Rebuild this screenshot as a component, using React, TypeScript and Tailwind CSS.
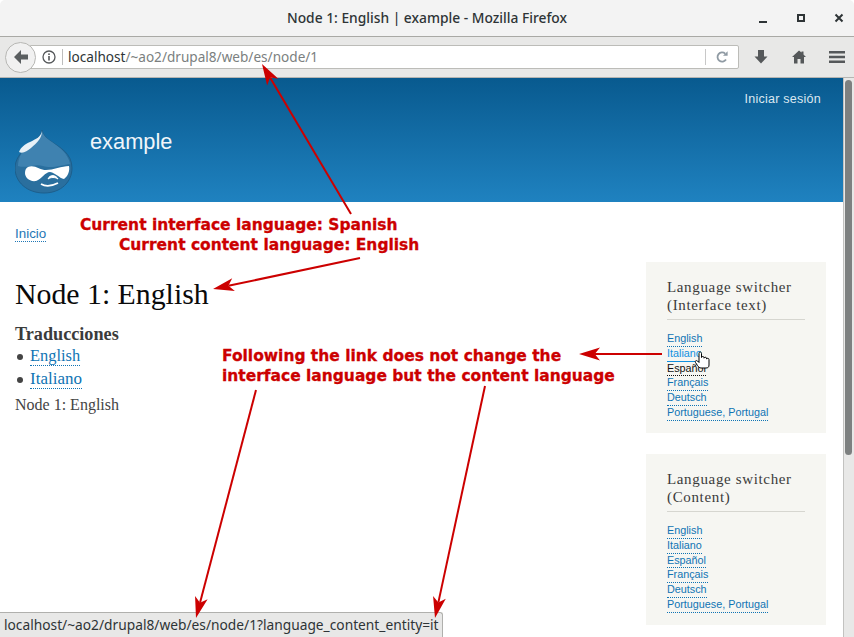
const langs1 = ["English", "Italiano", "Español", "Français", "Deutsch", "Portuguese, Portugal"];

function Drop() {
  return (
    <svg width="58" height="65" viewBox="0 0 58 65" className="block">
      <path d="M27 1 C26 8 19 12 12 18 C5 24 0 31 0 39 C0 53 12 64 29 64 C46 64 57 53 57 39 C57 24 44 18 37 13 C32 10 28 6 27 1 Z" fill="#2a6f9e" stroke="#1d5f8c" strokeWidth="1" />
      <path d="M27 2 C26 8 19 12 12 18 C6 23 3 30 3 37 C12 40 20 34 28 37 C36 40 48 36 55 35 C53 24 44 18 37 13 C32 10 28 6 27 2 Z" fill="#3f82b0" />
      <path d="M27 2 C27 9 22 14 16 19 C12 22 8 25 4 23 C6 18 10 15 15 13 C21 10 26 8 27 2 Z" fill="#e8f1f7" />
      <path d="M13 38 C19 35 25 41 31 41 C38 41 47 37 54 37 C55 42 53 47 49 50 C44 49 41 44 35 43 C30 43 27 50 21 52 C14 53 10 48 10 44 C10 41 11 39 13 38 Z" fill="#ffffff" />
      <path d="M33 50 C35 45 41 46 43 50 C40 48 36 48 33 50 Z" fill="#ffffff" stroke="#ffffff" strokeWidth="1" />
      <path d="M26 55 C31 58 37 57 43 54" fill="none" stroke="#ffffff" strokeWidth="1.8" />
    </svg>
  );
}

function Block({ title, second, active }: { title: string; second: string; active?: boolean }) {
  return (
    <div className="w-[180px] h-[171px] bg-[#f6f6f2] pt-[16px] px-[21px]">
      <h2 className="text-[15px] leading-[18px] text-[#3b3b3b] pb-[5px] border-b border-[#d6d6d0] font-['Liberation_Serif',serif] tracking-[0.65px] w-[138px]">
        {title}
        <br />
        {second}
      </h2>
      <ul className="mt-[12px] font-['Liberation_Sans',sans-serif] text-[10.8px] leading-[14px] flex flex-col items-start">
        {langs1.map((l, i) => (
          <li key={l}>
            <a
              className={
                active && i === 1
                  ? "text-[#1090e0] border-b border-[#1090e0] block leading-[13.8px]"
                  : active && i === 2
                    ? "text-[#111111] border-b border-dotted border-[#111111] block leading-[13.8px]"
                    : "text-[#0f74b4] border-b border-dotted border-[#0f74b4] block leading-[13.8px]"
              }
            >
              {l}
            </a>
          </li>
        ))}
      </ul>
    </div>
  );
}

function Arrow({ x1, y1, x2, y2 }: { x1: number; y1: number; x2: number; y2: number }) {
  const a = Math.atan2(y2 - y1, x2 - x1);
  const L = 21;
  const W = 6.5;
  const bx = x2 - L * Math.cos(a);
  const by = y2 - L * Math.sin(a);
  const nx = x2 - L * 0.75 * Math.cos(a);
  const ny = y2 - L * 0.75 * Math.sin(a);
  const px = -Math.sin(a) * W;
  const py = Math.cos(a) * W;
  return (
    <g>
      <line x1={x1} y1={y1} x2={nx} y2={ny} stroke="#cc0000" strokeWidth="2" />
      <polygon points={`${x2},${y2} ${bx + px},${by + py} ${nx},${ny} ${bx - px},${by - py}`} fill="#cc0000" />
    </g>
  );
}

const noteClass =
  "absolute font-['DejaVu_Sans',sans-serif] font-bold text-[15.48px] leading-[20px] text-[#cc0000] whitespace-nowrap [-webkit-text-stroke:0.3px_#cc0000]";

export default function App() {
  return (
    <div className="relative w-[854px] h-[637px] overflow-hidden flex flex-col bg-white font-['Noto_Sans',sans-serif]">
      {/* title bar */}
      <div className="relative h-[37px] shrink-0 bg-[#f3f3f3] border-b border-[#a9a9a5] rounded-t-[5px] flex items-center justify-center text-[13.8px] font-medium text-[#2e3436]">
        <span>Node 1: English | example - Mozilla Firefox</span>
        <div className="absolute right-[9px] top-0 h-full flex items-center gap-[26px] text-[#2e3436]">
          <svg width="12" height="12" viewBox="0 0 12 12"><rect x="2" y="9" width="8" height="2" fill="#2e3436" /></svg>
          <svg width="12" height="12" viewBox="0 0 12 12"><path d="M3 3h6v6H3z" fill="none" stroke="#2e3436" strokeWidth="2" /></svg>
          <svg width="12" height="12" viewBox="0 0 12 12"><path d="M2.500 2.500l7 7M9.500 2.500l-7 7" fill="none" stroke="#2e3436" strokeWidth="2" /></svg>
        </div>
      </div>
      {/* nav bar */}
      <div className="h-[41px] shrink-0 bg-[#e8e8e7] border-b border-[#b5b5b2] flex items-center pl-[5px] pr-[5px]">
        <div className="relative z-10 w-[31px] h-[31px] rounded-full border border-[#b7b7b4] bg-[#f1f1f1] flex items-center justify-center">
          <svg width="16" height="16" viewBox="0 0 16 16"><path d="M8 1L1 8l7 7v-4.500h7v-5H8z" fill="#5a5e60" /></svg>
        </div>
        <div className="-ml-[6px] w-[709px] h-[24px] bg-white border border-[#bcbcb8] rounded-r-[2px] flex items-center text-[13.6px]">
          <svg width="16" height="16" viewBox="0 0 16 16" className="ml-[10px] shrink-0">
            <circle cx="8" cy="8" r="6" fill="none" stroke="#55585a" strokeWidth="1.3" />
            <rect x="7.2" y="7" width="1.6" height="4.5" fill="#55585a" />
            <rect x="7.2" y="4.4" width="1.6" height="1.6" fill="#55585a" />
          </svg>
          <div className="ml-[5px] w-px h-[16px] bg-[#bdbdbd]" />
          <span className="ml-[5px] whitespace-nowrap text-[#2e3436]">
            localhost<span className="text-[#7b7f80]">/~ao2/drupal8/web/es/node/1</span>
          </span>
          <div className="ml-auto w-px h-[16px] bg-[#c8c8c8]" />
          <svg width="14" height="14" viewBox="0 0 14 14" className="mx-[9px] shrink-0">
            <path d="M11 9.500A4.600 4.600 0 1 1 10.200 3.600" fill="none" stroke="#8f9aa3" strokeWidth="1.800" />
            <path d="M8 5.800h4.600V1.200z" fill="#8f9aa3" />
          </svg>
        </div>
        <div className="flex items-center ml-[14px] gap-[22px]">
          <svg width="16" height="16" viewBox="0 0 16 16"><path d="M5 1h6v6.500h3.500L8 14.500 1.500 7.500H5z" fill="#55585a" /></svg>
          <svg width="16" height="16" viewBox="0 0 16 16"><path d="M8 1.500L1 8h2v6.500h3.500V10h3v4.500H13V8h2L12.500 5.500V2.500h-2v1z" fill="#55585a" /></svg>
          <svg width="16" height="14" viewBox="0 0 16 14"><path d="M0 1h16v2.600H0zM0 5.700h16v2.600H0zM0 10.400h16V13H0z" fill="#55585a" /></svg>
        </div>
      </div>
      {/* viewport */}
      <div className="flex-1 flex min-h-0">
        <div className="flex-1 min-w-0 flex flex-col">
          <header className="relative h-[124px] shrink-0 bg-gradient-to-b from-[#085a8f] to-[#1f82c0] pl-[15px] pr-[22px] flex items-end text-white">
            <div className="mb-[8px]"><Drop /></div>
            <div className="ml-[17px] mb-[48px] text-[21.8px] leading-[24px] font-['Liberation_Sans',sans-serif] text-[#f1f6fa]">example</div>
            <div className="absolute right-[22px] top-[14px] text-[12.5px] leading-[15px] font-['Liberation_Sans',sans-serif] tracking-[0.25px] text-[#dce8f1]">Iniciar sesión</div>
          </header>
          <div className="flex-1 flex min-h-0 pr-[17px]">
            <main className="flex-1 min-w-0 pl-[15px]">
              <div className="pt-[24px] font-['Liberation_Sans',sans-serif] text-[13.4px] leading-[15px]">
                <a className="text-[#1f77b5] border-b border-dotted border-[#1f77b5]">Inicio</a>
              </div>
              <h1 className="mt-[35px] font-['Liberation_Serif',serif] text-[29.8px] leading-[36px] text-[#0a0a0a]">Node 1: English</h1>
              <div className="mt-[11px] font-['Liberation_Serif',serif] text-[17px] leading-[22px] text-[#3b3b3b]">
                <div className="font-bold text-[18.2px]">Traducciones</div>
                <ul>
                  <li className="flex items-center h-[23px]">
                    <span className="w-[6px] h-[6px] rounded-full bg-[#444444] ml-[2px] mr-[7px]" />
                    <a className="text-[#0f74b4] border-b border-dotted border-[#0f74b4] leading-[18px] text-[16.4px]">English</a>
                  </li>
                  <li className="flex items-center h-[23px]">
                    <span className="w-[6px] h-[6px] rounded-full bg-[#444444] ml-[2px] mr-[7px]" />
                    <a className="text-[#0f74b4] border-b border-dotted border-[#0f74b4] leading-[18px]">Italiano</a>
                  </li>
                </ul>
                <p className="mt-[3px] text-[16px] text-[#444444]">Node 1: English</p>
              </div>
            </main>
            <aside className="w-[180px] shrink-0 pt-[60px] flex flex-col gap-[21px]">
              <Block title="Language switcher" second="(Interface text)" active />
              <Block title="Language switcher" second="(Content)" />
            </aside>
          </div>
        </div>
        {/* scrollbar */}
        <div className="w-[11px] shrink-0 bg-[#e8e8e7] border-l border-[#c2c2c0] pl-[1px] pt-[2px]">
          <div className="w-[7px] h-[375px] rounded-full bg-[#7d8080]" />
        </div>
      </div>

      {/* status overlay */}
      <div className="absolute left-0 bottom-0 w-[443px] h-[25px] bg-[#e8e8e7] border-t border-r border-[#b0b0ad] rounded-tr-[3px] pl-[4px] text-[13.75px] leading-[23px] text-[#2e3436] whitespace-nowrap">
        localhost/~ao2/drupal8/web/es/node/1?language_content_entity=it
      </div>

      {/* annotations */}
      <div className={`${noteClass} left-[80px] top-[215px]`}>Current interface language: Spanish</div>
      <div className={`${noteClass} left-[119px] top-[235px]`}>Current content language: English</div>
      <div className={`${noteClass} left-[222px] top-[346px]`}>Following the link does not change the</div>
      <div className={`${noteClass} left-[222px] top-[366px]`}>interface language but the content language</div>
      <svg className="absolute inset-0 pointer-events-none" width="854" height="637">
        <Arrow x1={351} y1={214} x2={262} y2={64} />
        <Arrow x1={360} y1={258} x2={213} y2={289} />
        <Arrow x1={662} y1={354} x2={579} y2={354} />
        <Arrow x1={256} y1={390} x2={196} y2={618} />
        <Arrow x1={485} y1={386} x2={435} y2={618} />
        {/* hand cursor */}
        <path d="M699 353.500c0-2 2.500-2 2.500 0v4c0-1.300 2.500-1.300 2.500 0v.7c0-1.300 2.500-1.300 2.500 0v.8c0-1 2.500-1 2.500 .5V365c0 2-1 3-3 3h-5c-1.500 0-2.500-1-3.500-2.500l-2-3c-1-1.500 .8-2.500 2-1.500l1.500 1.500z" fill="#ffffff" stroke="#000000" strokeWidth="1" />
      </svg>
    </div>
  );
}
